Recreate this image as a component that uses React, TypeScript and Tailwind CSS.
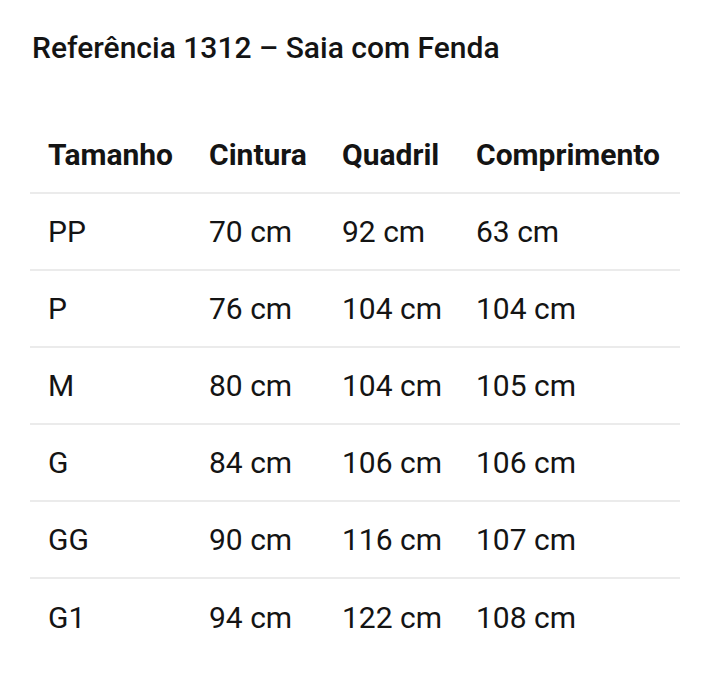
const rows = [
  ["PP", "70 cm", "92 cm", "63 cm"],
  ["P", "76 cm", "104 cm", "104 cm"],
  ["M", "80 cm", "104 cm", "105 cm"],
  ["G", "84 cm", "106 cm", "106 cm"],
  ["GG", "90 cm", "116 cm", "107 cm"],
  ["G1", "94 cm", "122 cm", "108 cm"],
];

const headers = ["Tamanho", "Cintura", "Quadril", "Comprimento"];
const widths = ["w-[161px]", "w-[133px]", "w-[134px]", "w-[222px]"];

export default function App() {
  return (
    <div className="min-h-[689px] w-[720px] bg-white text-[#141414] font-['Roboto',sans-serif]">
      <h1 className="pl-[32px] pt-[28px] text-[30px] leading-[40px] font-medium">
        Referência 1312 – Saia com Fenda
      </h1>
      <table className="ml-[30px] mt-[48px] w-[650px] border-collapse text-left">
        <thead>
          <tr className="border-b-2 border-[#ebebeb]">
            {headers.map((h, i) => (
              <th
                key={h}
                className={`${widths[i]} h-[77px] pl-[18px] align-middle text-[30px] font-bold`}
              >
                {h}
              </th>
            ))}
          </tr>
        </thead>
        <tbody>
          {rows.map((r, ri) => (
            <tr
              key={r[0]}
              className={ri < rows.length - 1 ? "border-b-2 border-[#ebebeb]" : ""}
            >
              {r.map((c, i) => (
                <td
                  key={i}
                  className="h-[77px] pl-[18px] align-middle text-[30px] font-normal"
                >
                  {c}
                </td>
              ))}
            </tr>
          ))}
        </tbody>
      </table>
    </div>
  );
}
